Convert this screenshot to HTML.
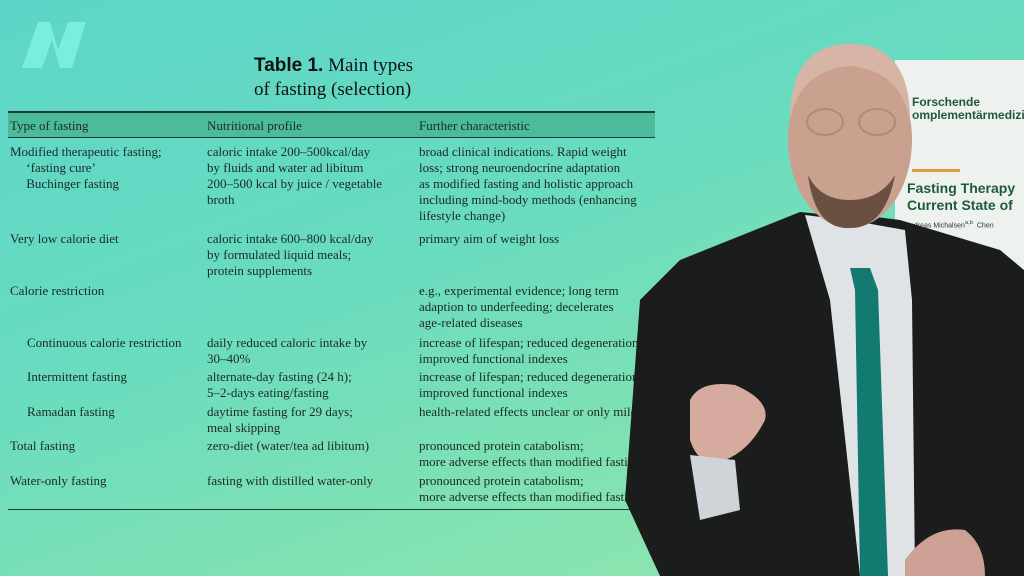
<!DOCTYPE html>
<html><head><meta charset="utf-8"><style>
*{margin:0;padding:0}
body{width:1024px;height:576px;overflow:hidden;position:relative;font-family:"Liberation Serif",serif;background:linear-gradient(160deg,#5cd6c8 0%,#68dbc0 40%,#86e3b0 80%,#96e6ac 100%);}
.t{position:absolute;font-size:13px;color:#1a2a24;white-space:nowrap;line-height:16px}
.line{position:absolute;left:8px;width:647px;background:#1f3a30}
</style></head><body>
<svg style="position:absolute;left:20px;top:20px" width="70" height="50"><path d="M2 48 L18 2 L30 2 L38 30 L48 2 L66 2 L52 48 L40 48 L32 20 L22 48Z" fill="#7ff1e4" opacity="0.85"/></svg>
<div class="t" style="left:254px;top:54px;font-size:19px;line-height:24px;color:#111"><b style="font-family:'Liberation Sans',sans-serif">Table 1.</b> Main types<br>of fasting (selection)</div>
<div style="position:absolute;left:8px;top:111px;width:647px;height:27px;background:#4cbb9c"></div>
<div class="line" style="top:111px;height:2px"></div>
<div class="line" style="top:137px;height:1px"></div>
<div class="line" style="top:509px;height:1px"></div>
<div class="t" style="left:10px;top:118px">Type of fasting</div>
<div class="t" style="left:207px;top:118px">Nutritional profile</div>
<div class="t" style="left:419px;top:118px">Further characteristic</div>
<div class="t" style="left:10px;top:144px">Modified therapeutic fasting;<br>&nbsp;&nbsp;&nbsp;&nbsp;&nbsp;‘fasting cure’<br>&nbsp;&nbsp;&nbsp;&nbsp;&nbsp;Buchinger fasting</div>
<div class="t" style="left:207px;top:144px">caloric intake 200–500kcal/day<br>by fluids and water ad libitum<br>200–500 kcal by juice / vegetable<br>broth</div>
<div class="t" style="left:419px;top:144px">broad clinical indications. Rapid weight<br>loss; strong neuroendocrine adaptation<br>as modified fasting and holistic approach<br>including mind-body methods (enhancing<br>lifestyle change)</div>
<div class="t" style="left:10px;top:231px">Very low calorie diet</div>
<div class="t" style="left:207px;top:231px">caloric intake 600–800 kcal/day<br>by formulated liquid meals;<br>protein supplements</div>
<div class="t" style="left:419px;top:231px">primary aim of weight loss</div>
<div class="t" style="left:10px;top:283px">Calorie restriction</div>
<div class="t" style="left:419px;top:283px">e.g., experimental evidence; long term<br>adaption to underfeeding; decelerates<br>age-related diseases</div>
<div class="t" style="left:27px;top:335px">Continuous calorie restriction</div>
<div class="t" style="left:207px;top:335px">daily reduced caloric intake by<br>30–40%</div>
<div class="t" style="left:419px;top:335px">increase of lifespan; reduced degeneration;<br>improved functional indexes</div>
<div class="t" style="left:27px;top:369px">Intermittent fasting</div>
<div class="t" style="left:207px;top:369px">alternate-day fasting (24 h);<br>5–2-days eating/fasting</div>
<div class="t" style="left:419px;top:369px">increase of lifespan; reduced degeneration;<br>improved functional indexes</div>
<div class="t" style="left:27px;top:404px">Ramadan fasting</div>
<div class="t" style="left:207px;top:404px">daytime fasting for 29 days;<br>meal skipping</div>
<div class="t" style="left:419px;top:404px">health-related effects unclear or only mild</div>
<div class="t" style="left:10px;top:438px">Total fasting</div>
<div class="t" style="left:207px;top:438px">zero-diet (water/tea ad libitum)</div>
<div class="t" style="left:419px;top:438px">pronounced protein catabolism;<br>more adverse effects than modified fasting</div>
<div class="t" style="left:10px;top:473px">Water-only fasting</div>
<div class="t" style="left:207px;top:473px">fasting with distilled water-only</div>
<div class="t" style="left:419px;top:473px">pronounced protein catabolism;<br>more adverse effects than modified fasting</div>
<div style="position:absolute;left:895px;top:60px;width:129px;height:240px;background:#eef2ee"></div>
<div style="position:absolute;left:912px;top:96px;font:bold 12px 'Liberation Sans',sans-serif;color:#1d5a3a;line-height:13px">Forschende<br>omplementärmedizi</div>
<div style="position:absolute;left:912px;top:169px;width:48px;height:3px;background:#e09a40"></div>
<div style="position:absolute;left:907px;top:180px;font:bold 14px 'Liberation Sans',sans-serif;color:#1d5a3a;line-height:17px">Fasting Therapy<br>Current State of</div>
<div style="position:absolute;left:910px;top:220px;font:7px 'Liberation Sans',sans-serif;color:#334">ndreas Michalsen<sup>a,b</sup> &nbsp;Chen</div>
<svg style="position:absolute;left:0;top:0" width="1024" height="576">
<path d="M660 576 L625 500 L640 300 L680 260 L800 212 L830 215 L860 215 L900 220 L1000 250 L1024 270 L1024 576Z" fill="#1b1d1c"/>
<path d="M805 215 L830 300 L860 576 L915 576 L912 300 L905 230 L860 222Z" fill="#dfe3e6"/>
<path d="M850 268 L870 268 L878 290 L888 576 L860 576 L855 290Z" fill="#137a70"/>
<ellipse cx="850" cy="140" rx="62" ry="88" fill="#caa08e"/>
<path d="M790 120 Q790 44 850 44 Q910 44 910 120 Q900 70 850 66 Q800 70 790 120Z" fill="#d7b5a6"/>
<path d="M808 175 Q815 230 850 228 Q885 228 895 175 Q880 200 850 200 Q820 200 808 175Z" fill="#6a5040"/>
<ellipse cx="825" cy="122" rx="18" ry="13" fill="none" stroke="#a89070" stroke-width="2"/>
<ellipse cx="877" cy="122" rx="18" ry="13" fill="none" stroke="#a89070" stroke-width="2"/>
<path d="M690 400 Q700 380 735 385 Q770 400 765 420 Q750 450 725 460 Q700 470 690 440Z" fill="#d7aaa0"/>
<path d="M690 455 L735 460 L740 510 L700 520Z" fill="#cfd4d8"/>
<path d="M905 560 Q930 525 965 530 Q985 545 985 576 L905 576Z" fill="#cca094"/>
</svg>
</body></html>
